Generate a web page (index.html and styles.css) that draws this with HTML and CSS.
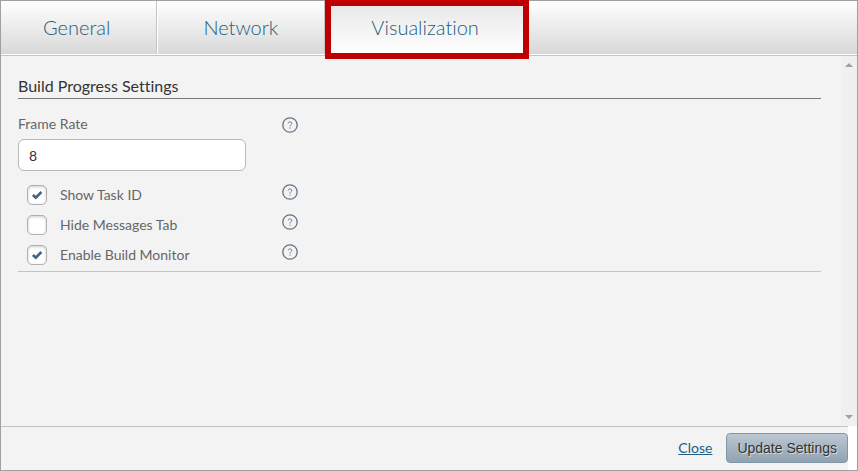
FILE: index.html
```html
<!DOCTYPE html>
<html lang="en">

<head>
    <meta charset="UTF-8">
    <meta name="viewport" content="width=device-width, initial-scale=1.0">
    <title>Settings</title>
    <link rel="stylesheet" href="styles.css">
</head>

<body>
    <!-- Shared icon -->
    <svg class="sprite" aria-hidden="true">
        <symbol id="help" viewBox="0 0 16 16">
            <circle cx="8" cy="8" r="7.2" fill="none" stroke="currentColor" stroke-width="1.3"/>
            <path d="M6.2 6.4C6.2 4.4 9.8 4.4 9.8 6.4C9.8 7.7 8 7.8 8 9.5M8 10.6V11.7" fill="none" stroke="currentColor" stroke-width="1"/>
        </symbol>
    </svg>

    <form class="dialog">
        <nav class="tabs">
            <a class="tab" href="#general">General</a>
            <a class="tab" href="#network">Network</a>
            <a class="tab active" href="#visualization">Visualization</a>
        </nav>

        <div class="content">
            <main class="panel">
                <h1>Build Progress Settings</h1>
                <div class="field">
                    <div class="field-input">
                        <label for="frameRate">Frame Rate</label>
                        <input type="text" id="frameRate" value="8">
                    </div>
                    <svg class="help"><use href="#help"/></svg>
                </div>
                <div class="options">
                    <div class="option">
                        <input type="checkbox" id="showTaskId" checked>
                        <label for="showTaskId">Show Task ID</label>
                        <svg class="help"><use href="#help"/></svg>
                    </div>
                    <div class="option">
                        <input type="checkbox" id="hideMessages">
                        <label for="hideMessages">Hide Messages Tab</label>
                        <svg class="help"><use href="#help"/></svg>
                    </div>
                    <div class="option">
                        <input type="checkbox" id="buildMonitor" checked>
                        <label for="buildMonitor">Enable Build Monitor</label>
                        <svg class="help"><use href="#help"/></svg>
                    </div>
                </div>
            </main>
            <div class="scrollbar">
                <span class="arrow up"></span>
                <span class="arrow down"></span>
            </div>
        </div>

        <footer class="footer">
            <a href="#close">Close</a>
            <button type="submit" class="btn">Update Settings</button>
        </footer>
    </form>
</body>

</html>
```
FILE: styles.css
```css
:root {
    --bg-color: #f3f3f3;
    --text-color: #666;
    --link-color: #215d80;
    --border-color: #a0a0a0;
    --line-color: #c4c4c4;
    --highlight: #c00000;
}

* {
    box-sizing: border-box;
}

body {
    margin: 0;
    font-family: Lato, sans-serif;
    font-size: 14px;
    font-variant-ligatures: none;
    line-height: 20px;
    color: var(--text-color);
    background-color: #fff;
}

.sprite {
    display: none;
}

.dialog {
    display: flex;
    flex-direction: column;
    min-height: 100vh;
    border: 1px solid var(--border-color);
}

/* Tabs */
.tabs {
    display: flex;
    height: 55px;
    border-bottom: 1px solid var(--line-color);
    background: linear-gradient(#fff, #d8d8d8) no-repeat 0 0 / 100% 53px;
}

.tab {
    position: relative;
    height: 53px;
    padding: 0 46px;
    border-right: 1px solid var(--line-color);
    box-shadow: 1px 0 #fff;
    font-size: 20px;
    font-weight: 300;
    line-height: 53px;
    color: var(--link-color);
    text-decoration: none;
}

.tab:first-child {
    padding-left: 42px;
}

.tab.active {
    background: linear-gradient(#e6e6e6, #fff);
}

.tab.active::after {
    content: "";
    position: absolute;
    inset: -1px -4px -5px 0;
    border: 6px solid var(--highlight);
}

/* Content */
.content {
    display: flex;
    flex: 1;
    background-color: var(--bg-color);
}

.panel {
    flex: 1;
    padding: 20px 20px 20px 17px;
}

h1 {
    margin: 0;
    padding-bottom: 2px;
    border-bottom: 1px solid #777;
    font-size: 16px;
    font-weight: 400;
    line-height: 20px;
    color: #333;
}

.field {
    display: flex;
    padding-top: 15px;
}

.field-input {
    width: 264px;
}

.field-input label {
    display: block;
}

.help {
    width: 16px;
    height: 16px;
    color: #637486;
}

.field .help {
    margin-top: 3px;
}

input[type="text"] {
    display: block;
    width: 228px;
    height: 32px;
    margin-top: 5px;
    padding: 0 10px;
    border: 1px solid #b8b8b8;
    border-radius: 6px;
    background-color: #fff;
    font: inherit;
    color: #333;
}

.options {
    padding: 9px 0 1px 9px;
    border-bottom: 1px solid var(--line-color);
}

.option {
    display: flex;
    align-items: center;
    height: 30px;
}

.option label {
    width: 222px;
    margin-left: 13px;
}

.option .help {
    margin-bottom: 6px;
}

input[type="checkbox"] {
    appearance: none;
    display: block;
    width: 20px;
    height: 20px;
    margin: 0;
    border: 1px solid #b0b0b0;
    border-radius: 5px;
    background-color: #fff;
    box-shadow: inset 0 1px 3px #ccc;
}

input[type="checkbox"]:checked {
    background-image: url("data:image/svg+xml,%3Csvg xmlns='http://www.w3.org/2000/svg' viewBox='0 0 18 18'%3E%3Cpath d='M4.8 9L7.8 11.6L13.4 6' fill='none' stroke='%23466482' stroke-width='2.6'/%3E%3C/svg%3E");
}

.scrollbar {
    display: flex;
    flex-direction: column;
    justify-content: space-between;
    align-items: center;
    width: 16px;
    padding: 7px 0;
    background-color: #f0f0f0;
}

.arrow {
    border: 4px solid transparent;
}

.arrow.up {
    border-top: 0;
    border-bottom-color: #a0a0a0;
}

.arrow.down {
    border-bottom: 0;
    border-top-color: #a0a0a0;
}

/* Footer */
.footer {
    display: flex;
    justify-content: flex-end;
    align-items: center;
    gap: 14px;
    height: 44px;
    margin-right: 9px;
    padding-bottom: 2px;
    border-top: 1px solid var(--line-color);
    background-color: var(--bg-color);
}

.footer a {
    color: var(--link-color);
}

.btn {
    height: 30px;
    padding: 0 10px;
    border: 1px solid #7f95aa;
    border-radius: 4px;
    background: linear-gradient(#bcc8d3, #93a2b0);
    font-family: "Liberation Sans", Arial, sans-serif;
    font-size: 14px;
    color: #333;
    text-shadow: 1px 1px #d3dce4;
    cursor: pointer;
}
```
